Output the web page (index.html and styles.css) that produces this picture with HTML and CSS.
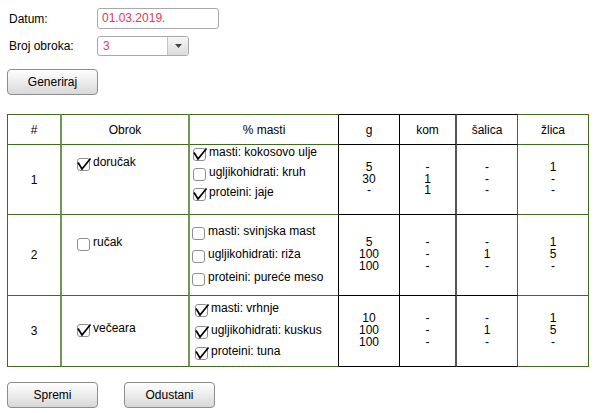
FILE: index.html
```html
<!DOCTYPE html>
<html>
<head>
<meta charset="utf-8">
<link rel="stylesheet" href="styles.css">
</head>
<body>
<div class="page">
  <div class="field field-date">
    <span class="field-label">Datum:</span>
    <div class="text-input">01.03.2019.</div>
  </div>
  <div class="field field-select">
    <span class="field-label">Broj obroka:</span>
    <div class="select">
      <span class="select-value">3</span>
      <span class="select-arrow"><svg width="7" height="4" viewBox="0 0 7 4"><path d="M0 0H7L3.5 4Z" fill="#444"/></svg></span>
    </div>
  </div>
  <button class="btn btn-generate">Generiraj</button>

  <table class="meals">
    <thead>
      <tr class="row-head">
        <th class="c-num">#</th>
        <th class="c-obrok">Obrok</th>
        <th class="c-masti">% masti</th>
        <th class="c-g">g</th>
        <th class="c-kom">kom</th>
        <th class="c-salica">šalica</th>
        <th class="c-zlica">žlica</th>
      </tr>
    </thead>
    <tbody>
      <tr class="row-1">
        <td class="c-num">1</td>
        <td class="c-obrok">
          <div class="check-item"><span class="box checked"><svg viewBox="0 0 13 13"><path d="M1 4.5L5 11L13.5 0.5"/></svg></span><span class="check-text">doručak</span></div>
        </td>
        <td class="c-masti">
          <div class="check-item"><span class="box checked"><svg viewBox="0 0 13 13"><path d="M1 4.5L5 11L13.5 0.5"/></svg></span><span class="check-text">masti: kokosovo ulje</span></div>
          <div class="check-item"><span class="box"></span><span class="check-text">ugljikohidrati: kruh</span></div>
          <div class="check-item"><span class="box checked"><svg viewBox="0 0 13 13"><path d="M1 4.5L5 11L13.5 0.5"/></svg></span><span class="check-text">proteini: jaje</span></div>
        </td>
        <td class="c-g"><div class="nums">5<br>30<br>-</div></td>
        <td class="c-kom"><div class="nums">-<br>1<br>1</div></td>
        <td class="c-salica"><div class="nums">-<br>-<br>-</div></td>
        <td class="c-zlica"><div class="nums">1<br>-<br>-</div></td>
      </tr>
      <tr class="row-2">
        <td class="c-num">2</td>
        <td class="c-obrok">
          <div class="check-item"><span class="box"></span><span class="check-text">ručak</span></div>
        </td>
        <td class="c-masti">
          <div class="check-item"><span class="box"></span><span class="check-text">masti: svinjska mast</span></div>
          <div class="check-item"><span class="box"></span><span class="check-text">ugljikohidrati: riža</span></div>
          <div class="check-item"><span class="box"></span><span class="check-text">proteini: pureće meso</span></div>
        </td>
        <td class="c-g"><div class="nums">5<br>100<br>100</div></td>
        <td class="c-kom"><div class="nums">-<br>-<br>-</div></td>
        <td class="c-salica"><div class="nums">-<br>1<br>-</div></td>
        <td class="c-zlica"><div class="nums">1<br>5<br>-</div></td>
      </tr>
      <tr class="row-3">
        <td class="c-num">3</td>
        <td class="c-obrok">
          <div class="check-item"><span class="box checked"><svg viewBox="0 0 13 13"><path d="M1 4.5L5 11L13.5 0.5"/></svg></span><span class="check-text">večeara</span></div>
        </td>
        <td class="c-masti">
          <div class="check-item"><span class="box checked"><svg viewBox="0 0 13 13"><path d="M1 4.5L5 11L13.5 0.5"/></svg></span><span class="check-text">masti: vrhnje</span></div>
          <div class="check-item"><span class="box checked"><svg viewBox="0 0 13 13"><path d="M1 4.5L5 11L13.5 0.5"/></svg></span><span class="check-text">ugljikohidrati: kuskus</span></div>
          <div class="check-item"><span class="box checked"><svg viewBox="0 0 13 13"><path d="M1 4.5L5 11L13.5 0.5"/></svg></span><span class="check-text">proteini: tuna</span></div>
        </td>
        <td class="c-g"><div class="nums">10<br>100<br>100</div></td>
        <td class="c-kom"><div class="nums">-<br>-<br>-</div></td>
        <td class="c-salica"><div class="nums">-<br>1<br>-</div></td>
        <td class="c-zlica"><div class="nums">1<br>5<br>-</div></td>
      </tr>
    </tbody>
  </table>

  <div class="actions">
    <button class="btn">Spremi</button>
    <button class="btn">Odustani</button>
  </div>
</div>
</body>
</html>
```

FILE: styles.css
```css
html, body {
  margin: 0;
  padding: 0;
  background: #fff;
}

body {
  font-family: "Liberation Sans", Arial, sans-serif;
  font-size: 12px;
  color: #000;
}

.page {
  padding: 8px 0 0 7px;
  display: flex;
  flex-direction: column;
  align-items: flex-start;
}

.field {
  display: flex;
  align-items: center;
}

.field-label {
  width: 88px;
  padding-left: 2px;
}

.field-date {
  height: 21px;
}

.field-select {
  height: 20px;
  margin-top: 7px;
}

.text-input {
  box-sizing: border-box;
  width: 122px;
  height: 21px;
  border: 1px solid #a9a9a9;
  border-radius: 3px;
  padding-left: 4px;
  line-height: 19px;
  color: #e2365c;
}

.select {
  box-sizing: border-box;
  width: 92px;
  height: 20px;
  border: 1px solid #a9a9a9;
  border-radius: 3px;
  display: flex;
  overflow: hidden;
}

.select-value {
  flex: 1;
  padding-left: 5px;
  line-height: 18px;
  color: #e8403a;
}

.select-arrow {
  width: 20px;
  border-left: 1px solid #c4c4c4;
  background: linear-gradient(#f7f7f7, #dcdcdc);
  display: flex;
  align-items: center;
  justify-content: center;
}

.select-arrow svg {
  display: block;
}

.btn {
  box-sizing: border-box;
  width: 91px;
  height: 26px;
  border: 1px solid #8c8c8c;
  border-radius: 4px;
  background: linear-gradient(#ffffff, #f0f0f0 40%, #d8d8d8);
  font-family: "Liberation Sans", Arial, sans-serif;
  font-size: 12px;
  color: #000;
  padding: 0;
}

.btn-generate {
  margin-top: 13px;
}

/* table */
.meals {
  margin-top: 19px;
  border-collapse: separate;
  border-spacing: 0;
  table-layout: fixed;
  width: 582px;
  border-left: 1px solid #3e6b1f;
}

.meals th,
.meals td {
  box-sizing: border-box;
  padding: 0;
  font-weight: normal;
  text-align: center;
  vertical-align: middle;
  border-right: 1px solid #000;
  border-bottom: 1px solid #000;
}

.meals th {
  border-top: 1px solid #000;
  line-height: 14px;
}

.row-head { height: 31px; }
.row-1 { height: 70px; }
.row-2 { height: 81px; }
.row-3 { height: 68px; }

.meals .c-num {
  width: 54px;
  border-right: 2px solid #6f975a;
  border-bottom-color: #3e6b1f;
  border-top-color: #3e6b1f;
}

.meals .c-obrok {
  width: 128px;
  border-right: 2px solid #6f975a;
  border-bottom-color: #3e6b1f;
  border-top-color: #3e6b1f;
}

.meals .c-masti {
  width: 149px;
  border-bottom-color: #3e6b1f;
  border-top-color: #3e6b1f;
}

.meals .c-g { width: 61px; }

.meals .c-kom {
  width: 57px;
  border-right: 2px solid #555;
}

.meals .c-salica {
  width: 61px;
  border-right-color: #3e6b1f;
}

.meals .c-zlica {
  width: 71px;
  border-right-color: #3e6b1f;
  border-bottom-color: #3e6b1f;
  border-top-color: #3e6b1f;
}

.meals td.c-obrok,
.meals td.c-masti {
  vertical-align: top;
  text-align: left;
}

.meals td.c-obrok { padding-left: 15px; }
.meals td.c-masti { padding-left: 3px; }

.row-1 td.c-obrok { padding-top: 10px; }
.row-2 td.c-obrok { padding-top: 20px; }
.row-3 td.c-obrok { padding-top: 25px; }

.row-1 td.c-masti { padding-top: 0; }
.row-2 td.c-masti { padding-top: 9px; padding-left: 2px; }
.row-3 td.c-masti { padding-top: 5px; padding-left: 5px; }

.check-item {
  display: flex;
  align-items: flex-start;
  height: 20px;
}

.row-2 .c-masti .check-item { height: 23px; }
.row-3 .c-masti .check-item { height: 21.5px; }

.box {
  box-sizing: border-box;
  width: 13px;
  height: 13px;
  margin-top: 3px;
  margin-right: 3px;
  border: 1px solid #8f8f8f;
  border-radius: 3px;
  background: #fff;
  position: relative;
  flex-shrink: 0;
}

.box svg {
  position: absolute;
  left: -1px;
  top: -1px;
  width: 13px;
  height: 13px;
  overflow: visible;
}

.box svg path {
  fill: none;
  stroke: #000;
  stroke-width: 1.7;
  stroke-linejoin: miter;
}

.check-text {
  line-height: 14px;
  white-space: nowrap;
}

.nums {
  line-height: 11.7px;
}

.actions {
  display: flex;
  gap: 26px;
  margin-top: 15px;
}
```
